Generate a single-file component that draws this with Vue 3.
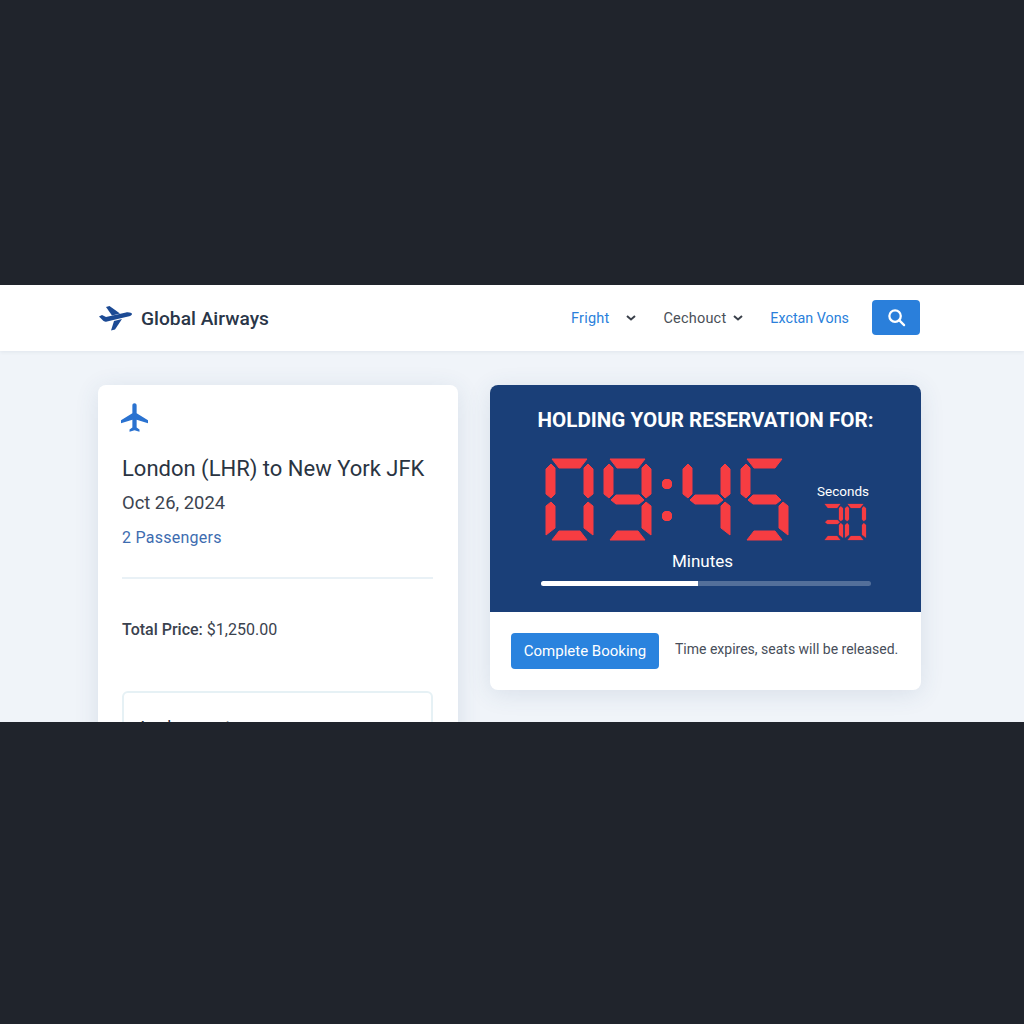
<template>
  <div class="page">
    <div class="stage">
      <header class="topbar">
        <div class="brand">
          <svg class="brand-icon" viewBox="0 0 33 25" aria-hidden="true">
            <path d="M0 10.5 3 9l4 2 20-4.500C30 6 33 7 33 8c0 1.500-3 2.500-6 3L8 15.500c-2 .5-3 0-4-1z" />
            <path d="M7 1 10.500 0 21 7.500 13 9.500z" />
            <path d="M12 24.500l4-1L23 13l-8 2z" />
          </svg>
          <span class="brand-name">Global Airways</span>
        </div>
        <nav class="nav">
          <a class="nav-link nav-link--blue">Fright</a>
          <svg class="chevron chevron--first" viewBox="0 0 10 6" aria-hidden="true"><path d="M1 1l4 3.500L9 1" /></svg>
          <a class="nav-link nav-checkout">Cechouct</a>
          <svg class="chevron" viewBox="0 0 10 6" aria-hidden="true"><path d="M1 1l4 3.500L9 1" /></svg>
          <a class="nav-link nav-link--blue nav-extra">Exctan Vons</a>
          <button class="search-btn" aria-label="Search">
            <svg viewBox="0 0 20 20" aria-hidden="true">
              <circle cx="8.500" cy="8.500" r="6" />
              <path d="M13 13 18 18" />
            </svg>
          </button>
        </nav>
      </header>

      <main class="content">
        <section class="card summary">
          <svg class="flight-icon" viewBox="2 2 19 20" aria-hidden="true">
            <path d="M21 16v-2l-8-5V3.500c0-.83-.67-1.500-1.500-1.500S10 2.670 10 3.500V9l-8 5v2l8-2.500V19l-2 1.500V22l3.500-1 3.500 1v-1.500L13 19v-5.500l8 2.500z" />
          </svg>
          <h2 class="route">London (LHR) to New York JFK</h2>
          <p class="date">Oct 26, 2024</p>
          <p class="passengers">2 Passengers</p>
          <hr class="divider" />
          <p class="total"><span class="total-label">Total Price:</span> $1,250.00</p>
          <div class="addons">
            <p class="addons-title">Anchor seat</p>
          </div>
        </section>

        <section class="card timer">
          <div class="timer-panel">
            <h1 class="timer-title">HOLDING YOUR RESERVATION FOR:</h1>
            <div class="clock">
              <div class="clock-main">
                <template v-for="(cell, i) in minuteCells" :key="i">
                  <span v-if="cell === ':'" class="colon"></span>
                  <svg v-else class="digit" viewBox="0 0 47 81" aria-hidden="true">
                    <polygon v-for="seg in segmentsFor(cell)" :key="seg" :points="seg" />
                  </svg>
                </template>
              </div>
              <div class="clock-seconds">
                <span class="seconds-label">Seconds</span>
                <div class="seconds-digits">
                  <svg v-for="d in secondDigits" :key="d" class="digit digit--small" viewBox="0 0 47 81" aria-hidden="true">
                    <polygon v-for="seg in segmentsFor(d)" :key="seg" :points="seg" />
                  </svg>
                </div>
              </div>
            </div>
            <div class="minutes-label">Minutes</div>
            <div class="progress">
              <div class="progress-fill" :style="{ width: progress + '%' }"></div>
            </div>
          </div>
          <div class="timer-footer">
            <button class="book-btn">Complete Booking</button>
            <span class="expire-note">Time expires, seats will be released.</span>
          </div>
        </section>
      </main>
    </div>
  </div>
</template>

<script setup>
const minuteCells = ['0', '9', ':', '4', '5']
const secondDigits = ['3', '0']
const progress = 47.700

// seven segment shapes, drawn on a 47x81 box
const shapes = {
  a: '6,0 41,0 34,9 13,9',
  b: '42,5 47,10 47,35 42,39 38,35 38,9',
  c: '42,43 47,47 47,76 38,69 38,47',
  d: '13,72 34,72 41,81 6,81',
  e: '5,43 9,47 9,69 0,76 0,47',
  f: '5,5 9,9 9,35 5,39 0,35 0,10',
  g: '7,41 12,36 35,36 40,41 35,45 12,45'
}

const digitMap = {
  0: 'abcdef',
  3: 'abcdg',
  4: 'bcfg',
  5: 'acdfg',
  9: 'abcdfg'
}

const segmentsFor = (d) => digitMap[d].split('').map((k) => shapes[k])
</script>

<style>
html,
body {
  margin: 0;
  background: #20242c;
}
</style>

<style scoped>
.page {
  height: 1024px;
  padding-top: 285px;
  box-sizing: border-box;
  background: #20242c;
  font-family: Roboto, "Liberation Sans", sans-serif;
}

.stage {
  height: 437px;
  overflow: hidden;
  background: #f0f4f9;
}

.topbar {
  height: 66px;
  box-sizing: border-box;
  padding: 0 104px 0 99px;
  display: flex;
  align-items: center;
  justify-content: space-between;
  background: #ffffff;
  box-shadow: 0 1px 4px rgba(40, 60, 90, 0.08);
  position: relative;
}

.brand {
  display: flex;
  align-items: center;
  gap: 9px;
}

.brand-icon {
  width: 33px;
  height: 25px;
  fill: #1c4a94;
}

.brand-name {
  font-size: 19.200px;
  font-weight: 500;
  color: #2a3648;
}

.nav {
  display: flex;
  align-items: center;
}

.nav-link {
  font-size: 14.500px;
  color: #4a5058;
  letter-spacing: 0.2px;
}

.nav-link--blue {
  color: #2a7fdb;
}

.chevron {
  width: 10px;
  height: 6px;
  fill: none;
  stroke: #3a404a;
  stroke-width: 2;
}

.chevron--first {
  margin-left: 17px;
  margin-right: 27px;
}

.nav-checkout {
  margin-right: 7px;
}

.nav-extra {
  margin-left: 27px;
  margin-right: 23px;
  font-size: 14.300px;
  letter-spacing: 0;
}

.search-btn {
  width: 48px;
  height: 35px;
  margin-top: -1px;
  padding: 0;
  border: none;
  border-radius: 4px;
  background: #2a7fdb;
  display: flex;
  align-items: center;
  justify-content: center;
}

.search-btn svg {
  width: 19px;
  height: 19px;
  fill: none;
  stroke: #ffffff;
  stroke-width: 2.400;
  stroke-linecap: round;
}

.content {
  padding: 34px 103px 0 98px;
  display: flex;
  align-items: flex-start;
  gap: 32px;
}

.card {
  background: #ffffff;
  border-radius: 8px;
  box-shadow: 0 4px 24px rgba(50, 80, 120, 0.12);
}

.summary {
  width: 360px;
  height: 420px;
  flex-shrink: 0;
  box-sizing: border-box;
  padding: 18px 25px 0 24px;
}

.flight-icon {
  display: block;
  width: 27px;
  height: 29px;
  margin-left: -1px;
  fill: #2a72d0;
}

.route {
  margin: 23px 0 0;
  font-size: 22px;
  line-height: 28px;
  font-weight: 400;
  color: #2a3442;
}

.date {
  margin: 8px 0 0;
  font-size: 18.400px;
  line-height: 24px;
  color: #3c4450;
}

.passengers {
  margin: 12px 0 0;
  font-size: 16px;
  line-height: 22px;
  letter-spacing: 0.25px;
  color: #3d6cb0;
}

.divider {
  margin: 28px 0 0;
  border: none;
  height: 2px;
  background: #e9f1f6;
}

.total {
  margin: 40px 0 0;
  font-size: 16px;
  line-height: 22px;
  color: #3a424e;
}

.total-label {
  font-weight: 500;
}

.addons {
  margin-top: 50px;
  height: 120px;
  box-sizing: border-box;
  padding: 23px 13px;
  border: 2px solid #e6f1f5;
  border-radius: 6px;
}

.addons-title {
  margin: 0;
  font-size: 17.500px;
  line-height: 24px;
  color: #2a3442;
}

.timer {
  width: 431px;
  flex-shrink: 0;
  overflow: hidden;
}

.timer-panel {
  height: 227px;
  box-sizing: border-box;
  padding-top: 21px;
  background: #1a3f78;
  color: #ffffff;
  display: flex;
  flex-direction: column;
  align-items: center;
}

.timer-title {
  margin: 0;
  font-size: 20.600px;
  line-height: 28px;
  font-weight: 700;
  color: #ffffff;
}

.clock {
  margin-top: 25px;
  margin-left: 4px;
  display: flex;
  align-items: flex-start;
  gap: 29px;
}

.clock-main {
  display: flex;
  align-items: center;
  gap: 11px;
}

.digit {
  display: block;
  width: 47px;
  height: 81px;
  fill: #f63d42;
  stroke: #f63d42;
  stroke-width: 1;
  stroke-linejoin: round;
  overflow: visible;
}

.digit--small {
  width: 21px;
  height: 38px;
  stroke-width: 0.500;
}

.colon {
  width: 10px;
  height: 42px;
  background:
    radial-gradient(circle at 5px 5px, #f63d42 5px, transparent 5.500px),
    radial-gradient(circle at 5px 37px, #f63d42 5px, transparent 5.500px);
}

.clock-seconds {
  display: flex;
  flex-direction: column;
  align-items: center;
}

.seconds-label {
  margin-top: 22px;
  font-size: 13.500px;
  line-height: 20px;
}

.seconds-digits {
  margin-top: 2px;
  margin-left: 3px;
  display: flex;
  gap: 2px;
}

.minutes-label {
  margin-top: 9px;
  margin-right: 6px;
  font-size: 17px;
  line-height: 22px;
}

.progress {
  margin-top: 9px;
  width: 330px;
  height: 5px;
  border-radius: 3px;
  background: rgba(255, 255, 255, 0.25);
  overflow: hidden;
}

.progress-fill {
  height: 100%;
  background: #ffffff;
}

.timer-footer {
  height: 78px;
  box-sizing: border-box;
  padding: 0 21px;
  display: flex;
  align-items: center;
  gap: 16px;
}

.book-btn {
  width: 148px;
  height: 36px;
  flex-shrink: 0;
  padding: 0;
  border: none;
  border-radius: 4px;
  background: #2a83de;
  color: #ffffff;
  font-family: inherit;
  font-size: 15px;
  font-weight: 400;
}

.expire-note {
  margin-top: -4px;
  font-size: 14px;
  white-space: nowrap;
  color: #474e5a;
}
</style>
